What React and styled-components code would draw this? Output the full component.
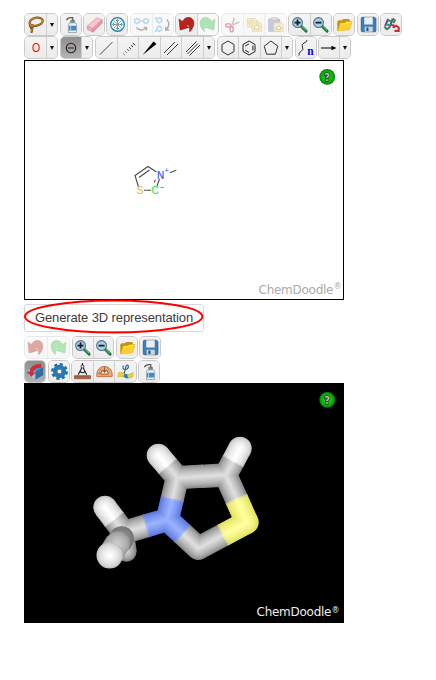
import React from "react";
import styled, { createGlobalStyle, css } from "styled-components";

const GlobalStyle = createGlobalStyle`
  body { margin: 0; background: #fff; font-family: "Liberation Sans", Arial, sans-serif; }
`;

const Page = styled.main`
  box-sizing: border-box;
  width: 436px;
  height: 680px;
  padding: 13px 0 0 24px;
  overflow: hidden;
`;

const Toolbar = styled.div`
  display: flex;
  gap: 2px;
  height: 23px;
  margin-bottom: ${(p) => p.$after || 0}px;
`;

const Group = styled.div`
  display: flex;
  box-sizing: border-box;
  flex: none;
  width: ${(p) => p.$width}px;
  height: 23px;
  margin-left: ${(p) => p.$shift || 0}px;
  border: 1px solid #c9c9c9;
  border-radius: 5px;
  overflow: hidden;
  opacity: ${(p) => (p.$faded ? 0.4 : 1)};
  background: #ededed;
`;

const Tool = styled.button`
  display: flex;
  align-items: center;
  justify-content: center;
  flex: ${(p) => (p.$narrow ? "0 0 11px" : "1 1 0")};
  min-width: 0;
  height: 21px;
  padding: 0;
  border: 0;
  background: linear-gradient(#f4f4f4, #ececec);
  & + & { border-left: 1px solid #cfcfcf; }
  ${(p) => p.$pressed && css`background: linear-gradient(#8f8f8f, #b3b3b3);`}
  ${(p) => p.$dim && css`& > svg { opacity: 0.4; } background: #f9f9f9;`}
`;

const Glyph = styled.svg`
  display: block;
  flex: none;
  width: ${(p) => p.$size}px;
  height: ${(p) => p.$size}px;
  overflow: visible;
`;

const Caret = styled.span`
  border: 2.5px solid transparent;
  border-top: 4px solid #111;
  border-bottom: 0;
`;

const Canvas = styled.section`
  box-sizing: border-box;
  width: 320px;
  height: 240px;
  background: ${(p) => (p.$dark ? "#000" : "#fff")};
  border: 1px solid #000;
`;

const Drawing = styled.svg`
  display: block;
  margin: -1px;
  width: 320px;
  height: 240px;
`;

const GenerateButton = styled.button`
  display: block;
  position: relative;
  box-sizing: border-box;
  width: 180px;
  height: 28px;
  margin: 4px 0;
  padding: 0 0 1px;
  border: 1px solid #d6d6d6;
  border-radius: 3px;
  background: #fff;
  color: #3c3c3c;
  font: 13px "Liberation Sans", Arial, sans-serif;
  letter-spacing: -0.12px;
  white-space: nowrap;
`;

const Highlight = styled.svg`
  position: absolute;
  left: -1px;
  top: -6px;
  width: 180px;
  height: 36px;
  pointer-events: none;
`;

const UndoShape = ({ fill, stroke }) => (
  <path d="M1.2 3.5 L2.6 16.5 L12.6 13.4 L9.6 11 C12.3 9.4 14.2 12.5 13.8 18.5 C21 11.5 20 1.8 12.2 1.8 C9 1.8 6.8 3.8 5 6.6Z" fill={fill} stroke={stroke} strokeWidth=".8" />
);

const Hexagon = "M10 3 L16 6.5 V13.5 L10 17 L4 13.5 V6.5Z";

const art = {
  lasso: (
    <g fill="none" strokeLinecap="round">
      <g stroke="#7c4e10" strokeWidth="2.7">
        <ellipse cx="10.8" cy="6.8" rx="7.9" ry="4.6" transform="rotate(-12 10.8 6.8)" />
        <path d="M3.4 9.5 Q3 13 6.5 13 Q9 12 6 11 Q3 14 6 15 L5.5 18.6" />
      </g>
      <g stroke="#c9913b" strokeWidth="1.1">
        <ellipse cx="10.8" cy="6.8" rx="7.9" ry="4.6" transform="rotate(-12 10.8 6.8)" />
        <path d="M3.4 9.5 Q3 13 6.5 13 M6 15 L5.5 18" />
      </g>
    </g>
  ),
  bottle: (
    <g>
      <path d="M4 5 Q5.5 2 9.5 2 H11.5 V8" fill="none" stroke="#555" strokeWidth="1.4" />
      <path d="M9 5 H13.5 V8 H9Z" fill="#888" stroke="#444" strokeWidth=".5" />
      <path d="M6.4 10 Q6.4 8 9 8 H13.5 Q16 8 16 10 V19.5 H6.4Z" fill="#e9f2f8" stroke="#788b98" strokeWidth=".8" />
      <path d="M7 11.5 H15.5 V17 H7Z" fill="#438ac4" />
      <path d="M9 10 V17" stroke="#b6daf1" />
    </g>
  ),
  eraser: (
    <g stroke="#c8798d" strokeWidth=".6">
      <path d="M1.5 12 L13 2 L19 4.5 L8 15Z" fill="#fbc3d0" />
      <path d="M1.5 12 L8 15 V19 L1.5 15.7Z" fill="#f3a9bb" />
      <path d="M8 15 L19 4.5 V8.5 L8 19Z" fill="#e695aa" />
    </g>
  ),
  snow: (
    <g fill="none">
      <circle cx="10" cy="10" r="8" fill="#f2fcff" stroke="#287ba5" strokeWidth="1.5" />
      <path d="M10 3 V17 M3 10 H17 M5.3 5.3 L14.7 14.7 M14.7 5.3 L5.3 14.7" stroke="#48a3b2" strokeWidth=".9" />
      <path d="M8 4.5 L10 6.5 L12 4.5 M8 15.5 L10 13.5 L12 15.5 M4.5 8 L6.5 10 L4.5 12 M15.5 8 L13.5 10 L15.5 12" stroke="#25727c" />
      <path d="M8.8 8.8 H11.2 V11.2 H8.8Z" fill="#e46b6b" />
    </g>
  ),
  flipH: (
    <g fill="none">
      <path d="M2 4.5 L4.7 3 L7.4 4.5 V7.5 L4.7 9 L2 7.5Z M12.6 4.5 L15.3 3 L18 4.5 V7.5 L15.3 9 L12.6 7.5Z M8.5 6 H11.5" stroke="#4f9fd0" strokeWidth="1.8" />
      <path d="M4 13.5 Q9 19 15 14.5 M12.5 13.3 L16 13.7 L15.5 17" stroke="#333" strokeWidth="1.6" />
    </g>
  ),
  flipV: (
    <g fill="none">
      <path d="M3.5 3.5 L6.3 2 L9 3.5 V6.5 L6.3 8 L3.5 6.5Z M3.5 13.5 L6.3 12 L9 13.5 V16.5 L6.3 18 L3.5 16.5Z M1 2 L3 3 M1 18 L3 17" stroke="#4f9fd0" strokeWidth="1.8" />
      <path d="M15 4 Q20 10 15 15.5 M13.8 12.5 V16.8 L18 16.3" stroke="#333" strokeWidth="1.6" />
    </g>
  ),
  undo: <UndoShape fill="#b8231b" stroke="#841914" />,
  redo: <g transform="translate(20 0) scale(-1 1)"><UndoShape fill="#3cc54c" stroke="#289c3a" /></g>,
  cut: (
    <g fill="none">
      <path d="M9.5 11 L12 2 M9 11 L18 7" stroke="#777" strokeWidth="1.8" />
      <ellipse cx="5" cy="11" rx="3" ry="2" stroke="#b02038" strokeWidth="1.8" />
      <ellipse cx="9" cy="15.5" rx="2" ry="3" stroke="#b02038" strokeWidth="1.8" />
    </g>
  ),
  copy: (
    <g fill="#efcf62" stroke="#b7954a" strokeWidth=".8">
      <path d="M1.5 3 H11 L13 5 V13 H1.5Z M7 7.5 H16.5 L18.5 9.5 V18 H7Z" />
      <path d="M4 10 V7 L7 5 M10 15.5 V12.5 L12.8 10.5 L15.5 12.5 V15.5Z" fill="#fff2bb" stroke="#725b28" />
    </g>
  ),
  paste: (
    <g>
      <path d="M2 3.5 H15 V18 H2Z" fill="#7970b8" stroke="#665ba5" />
      <path d="M5.5 2 H11.5 V5 H5.5Z" fill="#bbb" stroke="#777" />
      <path d="M8 8 H17 L19 10 V18.5 H8Z" fill="#f0d374" stroke="#a28a4b" strokeWidth=".8" />
      <path d="M11 16 V13 L13.5 11 L16 13 V16Z" fill="#fff2bb" stroke="#796229" />
    </g>
  ),
  folder: (
    <g>
      <path d="M1.5 17 V6.5 L3 5 H7 L8.5 3.5 H15.5 L16.5 5 V8Z" fill="#c4940b" />
      <path d="M1.8 17.5 L5 8.3 L10.5 8 L12 6.5 H19 L16 16.2Z" fill="#fcd12c" stroke="#dfae12" strokeWidth=".6" />
      <path d="M6 9.3 H11 L12.5 7.6 H17" fill="none" stroke="#ffe96f" />
    </g>
  ),
  save: (
    <g>
      <path d="M1.5 3 Q1.5 1.5 3 1.5 H17.2 L18.7 3 V17 Q18.7 18.5 17.2 18.5 H3 Q1.5 18.5 1.5 17Z" fill="#3b80b8" stroke="#255f91" />
      <path d="M5 1.5 H15 V10 H5Z" fill="#eee" />
      <path d="M5.5 12.5 H15 V18.5 H5.5Z" fill="#cfd6da" />
      <path d="M7.5 13.5 H10 V17.7 H7.5Z" fill="#29557a" />
    </g>
  ),
  search: (
    <g fill="none" strokeWidth="2.4">
      <path d="M2.5 12 L6 3.5 M7.5 13.5 L11.5 3" stroke="#5e4a9c" />
      <path d="M5.5 5 L10 6.5 M4 10 L9 11" stroke="#3c9960" />
      <path d="M1.5 12.5 L4.5 15.5 L8 13.5 M11.5 3 L14 5 L12 8.5" stroke="#39875a" />
      <path d="M12.5 14 V11 L9.5 10.5 M12.5 13.5 L15.5 11.5 L18.5 13.5 V17.5 H13.5" stroke="#c93037" />
    </g>
  ),
  oxygen: <text transform="translate(10 14.3) scale(.88 1)" textAnchor="middle" fontFamily="Liberation Sans, sans-serif" fontSize="12" fill="#f00">O</text>,
  minus: <g fill="none" stroke="#222" strokeWidth="1.1"><circle cx="10" cy="10" r="4.7" /><path d="M7 10 H13" /></g>,
  single: <path d="M4 16.5 L16.5 4" stroke="#333" strokeWidth=".9" />,
  dashed: <path d="M5.5 15.6 l.8 .8 M7.4 13.5 l1 1 M9.3 11.4 l1.3 1.3 M11.2 9.3 l1.6 1.6 M13.1 7.2 l1.9 1.9 M14.8 5 l2.3 2.3" stroke="#111" strokeWidth="1" />,
  wedge: <path d="M3.5 17 L14.5 3.5 L17.5 6Z" fill="#000" />,
  double: <path d="M3 15 L14 4 M6 17 L17 6" stroke="#222" strokeWidth=".9" />,
  triple: <path d="M3 14 L13.5 3.5 M4.5 16 L15 5.5 M6.5 17.5 L17 7" stroke="#222" strokeWidth=".9" />,
  hexagon: <path d={Hexagon} fill="none" stroke="#333" />,
  benzene: <g fill="none" stroke="#222"><path d={Hexagon} /><path d="M6.2 8 L10 5.8 M13.9 7.6 V12.4 M10 14.4 L6.2 12.2" /></g>,
  pentagon: <path d="M10 3 L16.8 8.2 L14.4 16.2 H5.6 L3.2 8.2Z" fill="none" stroke="#333" />,
  chain: (
    <g>
      <path d="M3 17.5 Q2 15 5 13.5 Q8 11.5 6.5 9 Q5 6.5 8 5 Q11 4 11 2" fill="none" stroke="#333" />
      <text x="11.2" y="16.5" fontFamily="Liberation Serif, serif" fontWeight="bold" fontSize="11.5" fill="#00f">n</text>
    </g>
  ),
  arrow: <g><path d="M2 10 H15" stroke="#000" /><path d="M12.5 7.8 L17.5 10 L12.5 12.2Z" /></g>,
  cube: (
    <g>
      <path d="M2 7 L11 1.5 L19 5 V14 L10 19.5 L2 15.5Z" fill="#4b93c3" />
      <path d="M2 7 L10 10.5 V19.5 L2 15.5Z" fill="#a8c8da" />
      <path d="M10 10.5 L19 5 V14 L10 19.5Z" fill="#316d9e" />
      <path d="M16.5 1.5 Q3.5 1.5 3.5 11 L.5 10.5 L5 16 L9.5 11.5 L6.8 11.2 Q8 5 16.5 4.8Z" fill="#e52731" stroke="#a91c24" strokeWidth=".5" />
    </g>
  ),
  gear: (
    <g fill="none">
      <circle cx="10" cy="10" r="8.3" stroke="#216a9f" strokeWidth="3.2" strokeDasharray="3.5 3.02" />
      <circle cx="10" cy="10" r="5.1" stroke="#2878b3" strokeWidth="5.4" />
    </g>
  ),
  compass: (
    <g fill="none" stroke="#222">
      <circle cx="10" cy="4" r="1.8" /><path d="M10 0 V2.5 M9 6 L5 13.8 M11 6 L15 13.8 M7 10 Q10 13 13 10" strokeWidth="1.3" />
      <path d="M.5 15 H19.5 V18.5 H.5Z" fill="#ad6840" stroke="#945331" />
      <path d="M4 15 V16.5 M7 15 V16.5 M10 15 V16.5 M13 15 V16.5 M16 15 V16.5" stroke="#6b3a24" strokeWidth=".6" />
    </g>
  ),
  protractor: (
    <g fill="none">
      <path d="M1 16 V13 A9 9 0 0 1 19 13 V16Z" fill="#eba66d" stroke="#b76931" />
      <path d="M5.5 13 A4.5 4.5 0 0 1 14.5 13Z" fill="#f7f2ee" stroke="#8b4b26" />
      <path d="M3 12 H5 M5 7.5 L6.5 9 M10 4.5 V12 M15 7.5 L13.5 9 M8 10 H12" stroke="#70452d" strokeWidth=".8" />
    </g>
  ),
  torsion: (
    <g>
      <path d="M1 12 Q5 9 10 12.5 Q14 15 19 10.5 V15.5 Q14 20 9 17 Q5 15 1 17Z" fill="#287abb" />
      <path d="M1 12 Q5 9 9 12 L8 16.5 Q5 15 1 17Z" fill="#f1cb2e" />
      <path d="M12 13.4 Q15 14.2 19 10.5 V15.5 Q17 18 13 18Z" fill="#f1cb2e" />
      <path d="M7.5 3 Q6 7.8 9.5 7.8 Q14 7.2 13.3 3.3 Q11.5 1 10.3 5 L8.5 12" fill="none" stroke="#28649c" strokeWidth="1.4" />
    </g>
  ),
};

const magnifier = (plus) => (
  <g>
    <path d="M12 12 L17.8 17.8" stroke="#22713f" strokeWidth="3.4" strokeLinecap="round" />
    <path d="M12.8 12 L17.8 16.8" stroke="#4ec278" strokeWidth="1.2" />
    <circle cx="7.7" cy="7.7" r="5.8" fill="#a5cee5" stroke="#536f83" strokeWidth="1.2" />
    <path d={plus ? "M7.7 4.2 V11.2 M4.2 7.7 H11.2" : "M4.2 7.7 H11.2"} stroke="#101d29" strokeWidth="2.1" />
  </g>
);
art.zoomIn = magnifier(true);
art.zoomOut = magnifier(false);

const lineArt = new Set(["oxygen", "minus", "single", "dashed", "wedge", "double", "triple", "hexagon", "benzene", "pentagon", "chain", "arrow"]);

function Bar({ groups, after }) {
  return (
    <Toolbar $after={after}>
      {groups.map(({ w, items, faded, pressed, dim, shift }, i) => (
        <Group key={i} $width={w} $faded={faded} $shift={shift}>
          {items.map((name, j) =>
            name === "more" ? (
              <Tool key={j} $narrow aria-label="More"><Caret /></Tool>
            ) : (
              <Tool key={j} $pressed={pressed === name} $dim={dim === name} aria-label={name}>
                <Glyph $size={lineArt.has(name) ? 20 : 17} viewBox="0 0 20 20">{art[name]}</Glyph>
              </Tool>
            )
          )}
        </Group>
      ))}
    </Toolbar>
  );
}

const sketchTop = [
  { w: 34, items: ["lasso", "more"] },
  { w: 22, items: ["bottle"] },
  { w: 22, items: ["eraser"], shift: -1 },
  { w: 22, items: ["snow"], shift: -1 },
  { w: 44, items: ["flipH", "flipV"], faded: true },
  { w: 44, items: ["undo", "redo"], dim: "redo", shift: -1 },
  { w: 66, items: ["cut", "copy", "paste"], faded: true },
  { w: 44, items: ["zoomIn", "zoomOut"], shift: -1 },
  { w: 22, items: ["folder"], shift: -1 },
  { w: 22, items: ["save"] },
  { w: 22, items: ["search"], shift: -1 },
];

const sketchBottom = [
  { w: 34, items: ["oxygen", "more"] },
  { w: 33, items: ["minus", "more"], pressed: "minus" },
  { w: 120, items: ["single", "dashed", "wedge", "double", "triple", "more"] },
  { w: 76, items: ["hexagon", "benzene", "pentagon", "more"] },
  { w: 22, items: ["chain"] },
  { w: 33, items: ["arrow", "more"], shift: -1 },
];

const viewTop = [
  { w: 46, items: ["undo", "redo"], faded: true },
  { w: 42, items: ["zoomIn", "zoomOut"] },
  { w: 22, items: ["folder"] },
  { w: 22, items: ["save"], shift: -1 },
];

const viewBottom = [
  { w: 22, items: ["cube"], pressed: "cube" },
  { w: 22, items: ["gear"] },
  { w: 66, items: ["compass", "protractor", "torsion"], shift: -1 },
  { w: 22, items: ["bottle"], shift: -1 },
];

function CanvasMarks({ id, color, x, y, markY }) {
  return (
    <g>
      <radialGradient id={id} cx="50%" cy="50%">
        <stop offset="0" stopColor="#00e400" />
        <stop offset=".65" stopColor="#08bc08" />
        <stop offset="1" stopColor="#077a07" />
      </radialGradient>
      <circle cx="303.2" cy="16.8" r="7.9" fill={`url(#${id})`} />
      <text x="303.2" y="20.7" textAnchor="middle" fontFamily="DejaVu Sans, sans-serif" fontWeight="bold" fontSize="10" fill="#bbb" stroke="#222" strokeWidth="1.4" paintOrder="stroke">?</text>
      <text x={x} y={y} textLength="75" fontFamily="DejaVu Sans, sans-serif" fontSize="12" fill={color}>ChemDoodle</text>
      <text x={x + 75} y={markY} fontFamily="DejaVu Sans, sans-serif" fontSize="8" fill={color}>®</text>
    </g>
  );
}

function FlatMolecule() {
  return (
    <g transform="translate(96 95)" fontFamily="Liberation Sans, sans-serif" fontSize="10">
      <path d="M18.5 32 L15 20.5 L28 11.5 L36.5 17 M19 22.5 L29.5 15 M39.5 24 L37 31 M34.2 27.6 L35.4 24.6 M24 35.3 H31 M50 17.7 L56.3 15.3" fill="none" stroke="#4a4a4a" strokeWidth="1.1" />
      <text x="37" y="23.5" fill="#3050f8" stroke="#3050f8" strokeWidth=".2">N</text>
      <text x="44.4" y="17.8" fontSize="7.5" fill="#3050f8">+</text>
      <text x="16.8" y="38.8" fill="#e9c545" stroke="#e9c545" strokeWidth=".2">S</text>
      <text x="31.6" y="38.8" fill="#2de82d" stroke="#2de82d" strokeWidth=".2">C</text>
      <path d="M40.4 32.5 H44" stroke="#2de82d" strokeWidth="1" />
    </g>
  );
}

// Each stick is built from narrowing, brightening strokes so it reads as a lit tube.
const palettes = {
  carbon: [[128, 128, 128], [222, 222, 222]],
  nitrogen: [[84, 113, 218], [152, 178, 255]],
  sulfur: [[222, 222, 88], [255, 255, 158]],
  hydrogen: [[185, 185, 185], [255, 255, 255]],
  pale: [[152, 152, 152], [205, 205, 205]],
  shade: [[115, 115, 115], [150, 150, 150]],
  back: [[120, 120, 120], [215, 215, 215]],
};
const STEPS = 22;
function tone(kind, t) {
  const [a, b] = palettes[kind];
  const k = Math.pow(t, kind === "hydrogen" ? 0.5 : 0.7);
  return `rgb(${a.map((v, i) => Math.round(v + (b[i] - v) * k)).join(",")})`;
}

const atoms = {
  c4: ["carbon", 292, 158],
  c5: ["carbon", 437, 150],
  c2: ["carbon", 355, 370],
  methyl: ["carbon", 132, 322],
  n: ["nitrogen", 262, 284],
  s: ["sulfur", 501, 292],
  h4: ["hydrogen", 235, 91],
  h5: ["hydrogen", 480, 70],
  hm: ["hydrogen", 75, 247],
};
const bonds = [["c4", "c5"], ["c5", "s"], ["c2", "s"], ["c2", "n"], ["c4", "n"], ["methyl", "n"], ["c4", "h4"], ["c5", "h5"], ["methyl", "hm"]];

// The carbon half runs slightly past the middle so no gap shows between colours.
const halves = [
  ...bonds.map(([a, b]) => half(atoms[a], atoms[b], 0.54)),
  ...bonds.map(([a, b]) => half(atoms[b], atoms[a], 0.5)),
];
function half([kind, x, y], [, x2, y2], f) {
  return { kind, x1: x, y1: y, x2: x + (x2 - x) * f, y2: y + (y2 - y) * f };
}

function Tubes({ sticks = [], balls = [], size }) {
  return Array.from({ length: STEPS }, (_, i) => {
    const t = i / (STEPS - 1);
    const width = size * (1 - t * 0.94);
    return (
      <g key={i}>
        {sticks.map(({ kind, ...line }, j) => <line key={j} {...line} stroke={tone(kind, t)} strokeWidth={width} />)}
        {balls.map(([kind, x, y], j) => <circle key={j} cx={x} cy={y} r={width / 2} fill={tone(kind, t)} />)}
      </g>
    );
  });
}

function SolidMolecule() {
  return (
    <g transform="translate(56 42) scale(.33333)">
      <Tubes size={62} sticks={[{ kind: "back", x1: 132, y1: 330, x2: 139, y2: 379 }]} balls={[["back", 139, 379]]} />
      <Tubes size={70} sticks={halves} balls={Object.values(atoms)} />
      <Tubes size={73} sticks={[{ kind: "shade", x1: 125, y1: 340, x2: 116, y2: 356 }]} balls={[["shade", 125, 340]]} />
      <Tubes size={74} sticks={[{ kind: "pale", x1: 113, y1: 354, x2: 91, y2: 388 }]} balls={[["pale", 113, 356]]} />
      <Tubes size={79} balls={[["hydrogen", 89, 391]]} />
    </g>
  );
}

export default function App() {
  return (
    <Page>
      <GlobalStyle />
      <Bar groups={sketchTop} />
      <Bar groups={sketchBottom} after={1} />
      <Canvas>
        <Drawing viewBox="0 0 320 240">
          <FlatMolecule />
          <CanvasMarks id="help-light" color="#aaa" x={234.5} y={234} markY={229} />
        </Drawing>
      </Canvas>
      <GenerateButton>
        Generate 3D representation
        <Highlight viewBox="0 0 180 36">
          <ellipse cx="89.7" cy="17.5" rx="88.7" ry="16" fill="none" stroke="#f00" strokeWidth="2" />
        </Highlight>
      </GenerateButton>
      <Bar groups={viewTop} after={1} />
      <Bar groups={viewBottom} />
      <Canvas $dark>
        <Drawing viewBox="0 0 320 240">
          <SolidMolecule />
          <CanvasMarks id="help-dark" color="#eee" x={232.5} y={232.5} markY={230} />
        </Drawing>
      </Canvas>
    </Page>
  );
}
